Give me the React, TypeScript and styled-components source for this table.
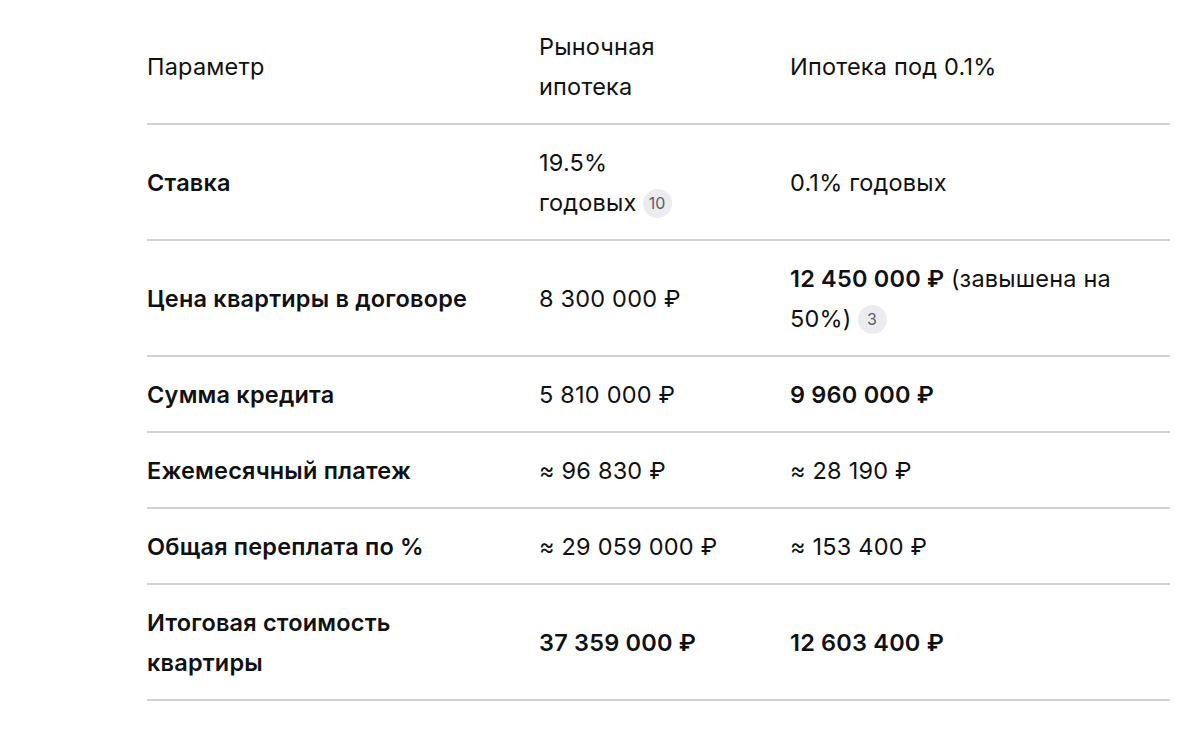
import React from "react";
import styled, { createGlobalStyle } from "styled-components";

const Global = createGlobalStyle`
  html, body { background: #ffffff; }
  body {
    margin: 8px;
    font-family: Inter, "Noto Sans", "Liberation Sans", sans-serif;
    color: #111113;
  }
`;

const Table = styled.div`
  margin: 1px 0 0 139px;
  width: 1023px;
  display: flex;
  flex-direction: column;
`;

const Row = styled.div`
  display: grid;
  grid-template-columns: 392px 251px 380px;
  border-bottom: 2px solid #d2d2d4;
`;

const Cell = styled.div<{ $bold?: boolean }>`
  padding: 18px 0 16px;
  display: flex;
  align-items: center;
  font-size: 23.5px;
  line-height: 40px;
  font-weight: ${(p) => (p.$bold ? 600 : 400)};
  letter-spacing: 0.2px;
`;

const Text = styled.div<{ $w: number }>`
  max-width: ${(p) => p.$w}px;
`;

const B = styled.b`
  font-weight: 600;
`;

const Keep = styled.span`
  white-space: nowrap;
`;

const Badge = styled.span`
  display: inline-flex;
  align-items: center;
  justify-content: center;
  min-width: 29px;
  height: 29px;
  padding: 0 4px;
  box-sizing: border-box;
  border-radius: 15px;
  background: #ececf0;
  color: #5c5c63;
  font-size: 16px;
  line-height: 1;
  font-weight: 400;
  letter-spacing: 0;
  vertical-align: 2px;
  margin-left: 6px;
`;

type R = { p: React.ReactNode; a: React.ReactNode; b: React.ReactNode };

const rows: R[] = [
  { p: "Ставка", a: <>19.5% <Keep>годовых<Badge>10</Badge></Keep></>, b: "0.1% годовых" },
  {
    p: "Цена квартиры в договоре",
    a: "8 300 000 ₽",
    b: <><B>12 450 000 ₽</B> (завышена на <Keep>50%)<Badge>3</Badge></Keep></>,
  },
  { p: "Сумма кредита", a: "5 810 000 ₽", b: <B>9 960 000 ₽</B> },
  { p: "Ежемесячный платеж", a: "≈ 96 830 ₽", b: "≈ 28 190 ₽" },
  { p: "Общая переплата по %", a: "≈ 29 059 000 ₽", b: "≈ 153 400 ₽" },
  { p: "Итоговая стоимость квартиры", a: <B>37 359 000 ₽</B>, b: <B>12 603 400 ₽</B> },
];

export default function App() {
  return (
    <>
      <Global />
      <Table>
        <Row>
          <Cell><Text $w={360}>Параметр</Text></Cell>
          <Cell><Text $w={192}>Рыночная ипотека</Text></Cell>
          <Cell><Text $w={355}>Ипотека под 0.1%</Text></Cell>
        </Row>
        {rows.map((r, i) => (
          <Row key={i}>
            <Cell $bold><Text $w={355}>{r.p}</Text></Cell>
            <Cell><Text $w={192}>{r.a}</Text></Cell>
            <Cell><Text $w={355}>{r.b}</Text></Cell>
          </Row>
        ))}
      </Table>
    </>
  );
}
